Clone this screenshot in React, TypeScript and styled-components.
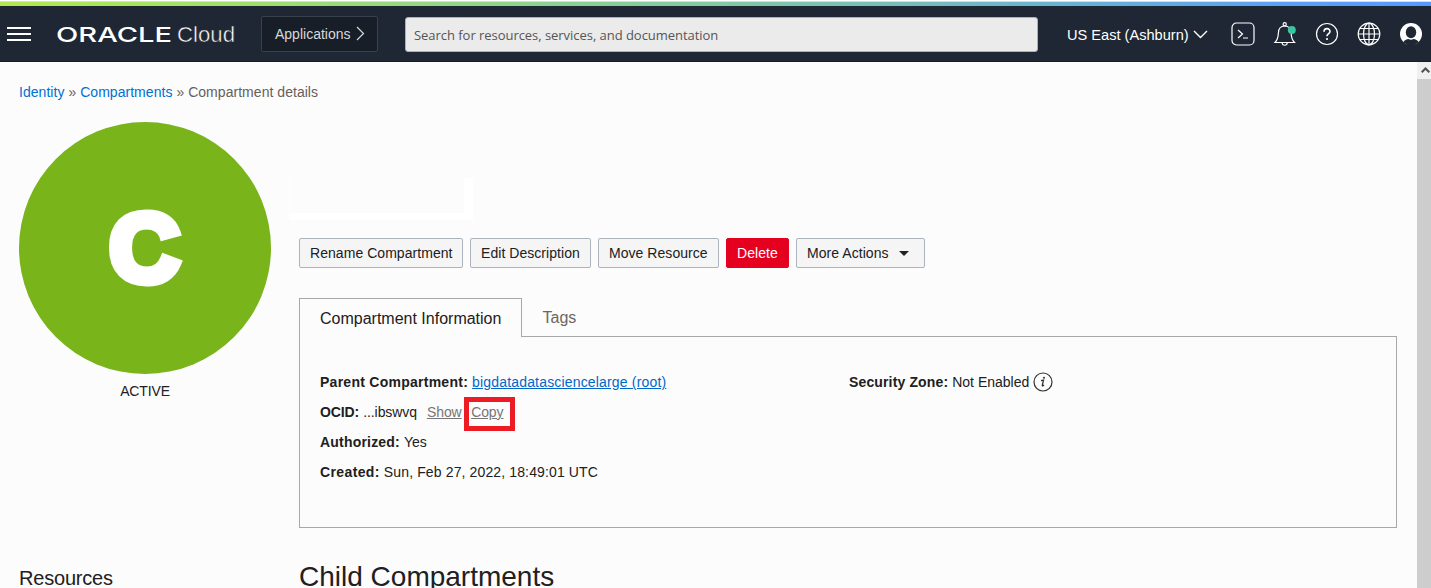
import React from "react";
import styled, { createGlobalStyle } from "styled-components";

const GlobalStyle = createGlobalStyle`
  * { box-sizing: border-box; }
  html, body { margin: 0; padding: 0; overflow: hidden; }
  body {
    background: #fcfcfc;
    color: #202020;
    font: 14px/20px "Liberation Sans", Arial, sans-serif;
  }
  svg { display: block; flex: none; }
`;

const Page = styled.div`
  display: flex;
  flex-direction: column;
  height: 588px;
  overflow: hidden;
`;

const Accent = styled.div`
  flex: none;
  height: 6px;
  border-top: 1px solid #fff;
  background: linear-gradient(90deg, #b1e84e 0%, #94d782 30%, #76bfb7 62%, #5b9ff5 90%, #5599ff 100%);
  box-shadow: inset 0 1px 0 #dcdcdc;
`;

const Header = styled.header`
  flex: none;
  display: flex;
  align-items: center;
  height: 56px;
  padding-left: 7px;
  background: #1e2733;
  border-bottom: 1px solid #161c2a;
  color: #fff;
`;

const MenuButton = styled.div`
  display: flex;
  flex-direction: column;
  gap: 4px;
  width: 24px;
  margin: 1px 24px 0 0;
`;

const MenuBar = styled.span`
  height: 2px;
  background: #fff;
`;

const AppButton = styled.div`
  display: flex;
  align-items: center;
  gap: 5px;
  width: 117px;
  height: 36px;
  margin: 0 27px 0 22px;
  padding-left: 13px;
  background: #171e27;
  border: 1px solid #39414d;
  border-radius: 2px;
  color: #d8d9db;
`;

const SearchBox = styled.div`
  width: 633px;
  height: 35px;
  margin-top: 1px;
  padding-left: 8px;
  background: #ebebeb;
  border: 1px solid #a9b1bb;
  border-radius: 3px;
  color: #555;
  font: 13px/34px "Open Sans", "Noto Sans", sans-serif;
  letter-spacing: -0.04px;
  white-space: nowrap;
`;

const Region = styled.div`
  display: flex;
  align-items: center;
  gap: 4px;
  width: 142px;
  margin: 2px 22px 0 29px;
  font-size: 14.6px;
  white-space: nowrap;
`;

const Tools = styled.div`
  display: flex;
  gap: 18px;
`;

const Body = styled.div`
  flex: 1;
  display: flex;
  min-height: 0;
`;

const Content = styled.main`
  flex: 1;
  padding: 20px 20px 0 19px;
  overflow: hidden;
`;

const ScrollTrack = styled.div`
  width: 14px;
  background: #cdcdcd;
`;

const ScrollUp = styled.div`
  display: flex;
  justify-content: flex-end;
  height: 17px;
  padding: 5px 1px 0 0;
  background: #f0f0f0;
`;

const Crumbs = styled.nav`
  height: 20px;
  color: #665f5b;
  letter-spacing: 0.04px;
  white-space: pre;
`;

const CrumbLink = styled.a`
  color: #0070d2;
`;

const Columns = styled.div`
  display: flex;
  gap: 28px;
  margin-top: 20px;
`;

const Side = styled.aside`
  display: flex;
  flex-direction: column;
  width: 252px;
`;

const Badge = styled.div`
  height: 252px;
  border-radius: 50%;
  background: #78b41a;
`;

const Status = styled.div`
  margin-top: 7px;
  letter-spacing: -0.15px;
  text-align: center;
`;

const SideTitle = styled.h2`
  margin: 164px 0 0;
  font-size: 20px;
  line-height: 26px;
  letter-spacing: -0.2px;
  font-weight: 400;
`;

const Main = styled.section`
  flex: 1;
`;

const NameBox = styled.div`
  width: 184px;
  height: 42px;
  margin: 56px 0 18px -10px;
  border: solid #fff;
  border-width: 0 9px 7px 1px;
`;

const Actions = styled.div`
  display: flex;
  gap: 7px;
`;

const ActionButton = styled.button<{ $width: number; $danger?: boolean }>`
  display: flex;
  align-items: center;
  gap: 10px;
  width: ${(p) => p.$width}px;
  height: 30px;
  padding: 0 0 0 10px;
  border: 1px solid ${(p) => (p.$danger ? "#e6001f" : "#adb3bc")};
  border-radius: 2px;
  background: ${(p) => (p.$danger ? "#e6001f" : "#f5f5f5")};
  color: ${(p) => (p.$danger ? "#fff" : "#202020")};
  font: 14px/20px "Liberation Sans", Arial, sans-serif;
  letter-spacing: 0.05px;
  white-space: nowrap;
`;

const Tabs = styled.div`
  display: flex;
  height: 39px;
  margin-top: 30px;
  font-size: 16px;
`;

const ActiveTab = styled.div`
  width: 223px;
  padding-left: 20px;
  border: 1px solid #a8a8a8;
  border-bottom: 0;
  line-height: 40px;
`;

const Tab = styled.div`
  flex: 1;
  padding-left: 20.5px;
  border-bottom: 1px solid #a8a8a8;
  color: #6b6663;
  line-height: 40px;
`;

const Panel = styled.div`
  display: grid;
  grid-template-columns: 529px 1fr;
  height: 191px;
  padding: 35px 20px 0;
  border: 1px solid #a8a8a8;
  border-top: 0;
`;

const Row = styled.div<{ $tracking?: number }>`
  display: flex;
  align-items: center;
  gap: 4px;
  height: 20px;
  margin-bottom: 10px;
  letter-spacing: ${(p) => p.$tracking ?? 0}px;
  white-space: nowrap;
`;

const Label = styled.b<{ $tracking?: number }>`
  letter-spacing: ${(p) => p.$tracking ?? 0}px;
`;

const RootLink = styled.a`
  color: #0067c8;
  text-decoration: underline;
`;

const MutedLink = styled.a`
  color: #767676;
  text-decoration: underline;
`;

const OcidActions = styled.span`
  display: flex;
  gap: 9.5px;
  margin-left: 6px;
`;

const Highlight = styled.span`
  position: relative;
  &::after {
    content: "";
    position: absolute;
    left: -7px;
    top: -5px;
    width: 51px;
    height: 34px;
    border: 5px solid #ed1c24;
    box-sizing: border-box;
  }
`;

const MainTitle = styled.h1`
  margin: 31px 0 0;
  font-size: 28px;
  line-height: 36px;
  font-weight: 400;
`;

const Logo = () => (
  <svg width="184" height="30" viewBox="0 0 184 30" fill="#fff">
    <text x="1" y="22.500" fontFamily="Inter, sans-serif" fontWeight="500" fontSize="20.500" textLength="116" lengthAdjust="spacingAndGlyphs">ORACLE</text>
    <text x="122" y="22.500" fontFamily="Liberation Sans, Arial, sans-serif" fontSize="22" stroke="#1e2733" strokeWidth="0.500" textLength="58" lengthAdjust="spacingAndGlyphs">Cloud</text>
  </svg>
);

const iconProps = { width: 24, height: 24, viewBox: "0 0 24 24", fill: "none", stroke: "#fff", strokeWidth: 1.2 };

const TerminalIcon = () => (
  <svg {...iconProps}>
    <rect x="1" y="1" width="22" height="22" rx="4.5" />
    <path d="M7 8l4.500 4L7 16M12 16h5" />
  </svg>
);

const BellIcon = () => (
  <svg {...iconProps}>
    <circle cx="11.700" cy="2.300" r="1.600" />
    <path d="M2 20.500h19.500c-2.800-2.700-3.200-5.500-3.400-9.500C18 6.700 15.500 4 11.700 4S5.500 6.700 5.400 11C5.200 15 4.800 17.800 2 20.500zM9.200 21c.3 3 4.700 3 5 0" />
    <circle cx="18.800" cy="8" r="4" fill="#38c5a4" stroke="none" />
  </svg>
);

const HelpIcon = () => (
  <svg {...iconProps}>
    <circle cx="12" cy="12" r="10.500" />
    <path d="M9 9.800c0-4.200 6-4.100 6-.4 0 2.200-3 2.300-3 4.900" strokeWidth="1.600" />
    <circle cx="12" cy="17" r="1.100" fill="#fff" stroke="none" />
  </svg>
);

const GlobeIcon = () => (
  <svg {...iconProps}>
    <circle cx="12" cy="12" r="10.800" />
    <ellipse cx="12" cy="12" rx="5.500" ry="10.800" />
    <path d="M12 1v22M1 12h22M3 6.500h18M3 17.500h18" />
  </svg>
);

const UserIcon = () => (
  <svg {...iconProps} stroke="none">
    <circle cx="12" cy="12" r="11" fill="#fff" />
    <ellipse cx="12" cy="10.300" rx="5.200" ry="6" fill="#1e2733" />
    <path d="M4.300 20.200c1.200-2.200 3.200-2.700 5.200-3.100 1.600.9 3.400.9 5 0 2 .4 4 .9 5.200 3.100a11.200 11.200 0 0 1-15.400 0z" fill="#1e2733" />
  </svg>
);

const InfoIcon = () => (
  <svg width="20" height="20" viewBox="0 0 20 20">
    <circle cx="10" cy="10" r="9" fill="none" stroke="#303030" strokeWidth="1.200" />
    <path d="M8 8.700l2.500-.5-1.200 5.200c-.2.800.6.700 1.700-.3" fill="none" stroke="#303030" strokeWidth="1.300" />
    <circle cx="11" cy="5.800" r="1" fill="#303030" />
  </svg>
);

export default function App() {
  return (
    <Page>
      <GlobalStyle />
      <Accent />
      <Header>
        <MenuButton><MenuBar /><MenuBar /><MenuBar /></MenuButton>
        <Logo />
        <AppButton>
          Applications
          <svg width="9" height="15" viewBox="0 0 9 15" fill="none" stroke="#d8d9db" strokeWidth="1.200"><path d="M1 1l6.500 6.500L1 14" /></svg>
        </AppButton>
        <SearchBox>Search for resources, services, and documentation</SearchBox>
        <Region>
          US East (Ashburn)
          <svg width="15" height="9" viewBox="0 0 15 9" fill="none" stroke="#fff" strokeWidth="1.400"><path d="M1 1l6.500 6.500L14 1" /></svg>
        </Region>
        <Tools><TerminalIcon /><BellIcon /><HelpIcon /><GlobeIcon /><UserIcon /></Tools>
      </Header>
      <Body>
        <Content>
          <Crumbs><CrumbLink>Identity</CrumbLink> » <CrumbLink>Compartments</CrumbLink> » Compartment details</Crumbs>
          <Columns>
            <Side>
              <Badge>
                <svg width="252" height="252" viewBox="0 0 252 252">
                  <text x="125.500" y="158.500" textAnchor="middle" fill="#fff" stroke="#fff" strokeWidth="9" fontFamily="Liberation Sans, Arial, sans-serif" fontWeight="700" fontSize="97">C</text>
                </svg>
              </Badge>
              <Status>ACTIVE</Status>
              <SideTitle>Resources</SideTitle>
            </Side>
            <Main>
              <NameBox />
              <Actions>
                <ActionButton $width={164}>Rename Compartment</ActionButton>
                <ActionButton $width={121}>Edit Description</ActionButton>
                <ActionButton $width={121}>Move Resource</ActionButton>
                <ActionButton $width={63} $danger>Delete</ActionButton>
                <ActionButton $width={129}>
                  More Actions
                  <svg width="10" height="5" viewBox="0 0 10 5"><path d="M0 0h10L5 5z" fill="#202020" /></svg>
                </ActionButton>
              </Actions>
              <Tabs>
                <ActiveTab>Compartment Information</ActiveTab>
                <Tab>Tags</Tab>
              </Tabs>
              <Panel>
                <div>
                  <Row $tracking={0.17}><Label $tracking={0.26}>Parent Compartment:</Label><RootLink>bigdatadatasciencelarge (root)</RootLink></Row>
                  <Row $tracking={-0.08}>
                    <Label $tracking={-0.1}>OCID:</Label>...ibswvq
                    <OcidActions><MutedLink>Show</MutedLink><Highlight><MutedLink>Copy</MutedLink></Highlight></OcidActions>
                  </Row>
                  <Row><Label $tracking={0.2}>Authorized:</Label>Yes</Row>
                  <Row $tracking={0.13}><Label $tracking={0.38}>Created:</Label>Sun, Feb 27, 2022, 18:49:01 UTC</Row>
                </div>
                <Row><Label $tracking={0.14}>Security Zone:</Label>Not Enabled<InfoIcon /></Row>
              </Panel>
              <MainTitle>Child Compartments</MainTitle>
            </Main>
          </Columns>
        </Content>
        <ScrollTrack>
          <ScrollUp><svg width="9" height="6" viewBox="0 0 9 6" fill="none" stroke="#505050" strokeWidth="2"><path d="M.7 5.300L4.500 1.500 8.300 5.300" /></svg></ScrollUp>
        </ScrollTrack>
      </Body>
    </Page>
  );
}
